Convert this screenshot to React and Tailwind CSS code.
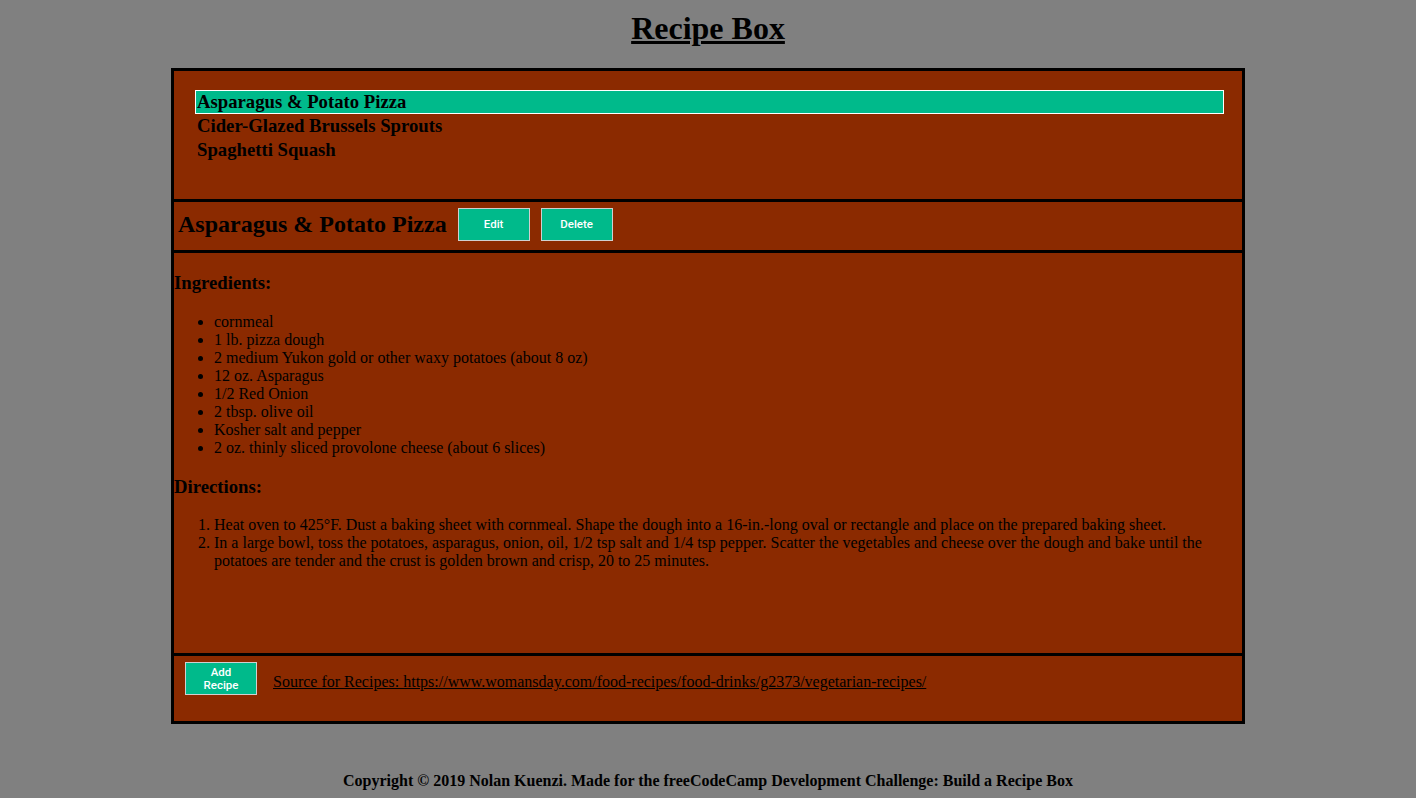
import React from "react";

const serif = { fontFamily: '"Liberation Serif", "Times New Roman", serif' };
const sans = { fontFamily: 'Roboto, "Liberation Sans", Arial, sans-serif' };

const recipes = [
  "Asparagus & Potato Pizza",
  "Cider-Glazed Brussels Sprouts",
  "Spaghetti Squash",
];

const ingredients = [
  "cornmeal",
  "1 lb. pizza dough",
  "2 medium Yukon gold or other waxy potatoes (about 8 oz)",
  "12 oz. Asparagus",
  "1/2 Red Onion",
  "2 tbsp. olive oil",
  "Kosher salt and pepper",
  "2 oz. thinly sliced provolone cheese (about 6 slices)",
];

const directions = [
  "Heat oven to 425°F. Dust a baking sheet with cornmeal. Shape the dough into a 16-in.-long oval or rectangle and place on the prepared baking sheet.",
  "In a large bowl, toss the potatoes, asparagus, onion, oil, 1/2 tsp salt and 1/4 tsp pepper. Scatter the vegetables and cheese over the dough and bake until the potatoes are tender and the crust is golden brown and crisp, 20 to 25 minutes.",
];

function Btn({ children }) {
  return (
    <button
      style={sans}
      className="w-[72px] h-[33px] shrink-0 bg-[#00ba8b] border border-[#d0d0d0] text-white text-[11.5px] font-medium leading-[13px] px-[10px]"
    >
      {children}
    </button>
  );
}

export default function App() {
  return (
    <div style={serif} className="min-h-[798px] bg-[#808080] text-black">
      <h1 className="text-center text-[32px] font-bold underline leading-[37px] pt-[10px] mb-[21px]">
        Recipe Box
      </h1>
      <div className="mx-auto w-[1074px] border-[3px] border-black bg-[#8b2a00]">
        <div className="pt-[19px] pb-[37px] pl-[21px] pr-[18px]">
          {recipes.map((r, i) => (
            <div
              key={r}
              className={
                "text-[18.72px] font-bold leading-[22px] px-[1px] border " +
                (i === 0 ? "bg-[#00ba8b] border-white" : "border-transparent")
              }
            >
              {r}
            </div>
          ))}
        </div>
        <div className="border-t-[3px] border-black flex items-center gap-[11px] pl-[4px] pt-[6px] pb-[9px]">
          <h2 className="text-[24px] font-bold leading-[28px] -mt-[2px]">Asparagus &amp; Potato Pizza</h2>
          <Btn>Edit</Btn>
          <Btn>Delete</Btn>
        </div>
        <div className="border-t-[3px] border-black h-[403px] text-[16px] leading-[18px]">
          <h3 className="text-[18.72px] font-bold leading-[22px] pt-[18.5px]">Ingredients:</h3>
          <ul className="list-disc pl-10 mt-[19.5px]">
            {ingredients.map((x) => (
              <li key={x}>{x}</li>
            ))}
          </ul>
          <h3 className="text-[18.72px] font-bold leading-[22px] mt-[19px]">Directions:</h3>
          <ol className="list-decimal pl-10 mt-[18px] pr-[30px]">
            {directions.map((x) => (
              <li key={x}>{x}</li>
            ))}
          </ol>
        </div>
        <div className="border-t-[3px] border-black flex items-start gap-[16px] pl-[11px] pt-[6px] h-[68px]">
          <Btn>Add Recipe</Btn>
          <a href="#" className="underline text-[16px] leading-[18px] mt-[11px]">
            Source for Recipes: https://www.womansday.com/food-recipes/food-drinks/g2373/vegetarian-recipes/
          </a>
        </div>
      </div>
      <p className="text-center font-bold text-[16px] leading-[18px] mt-[48px]">
        Copyright © 2019 Nolan Kuenzi. Made for the freeCodeCamp Development Challenge: Build a Recipe Box
      </p>
    </div>
  );
}
